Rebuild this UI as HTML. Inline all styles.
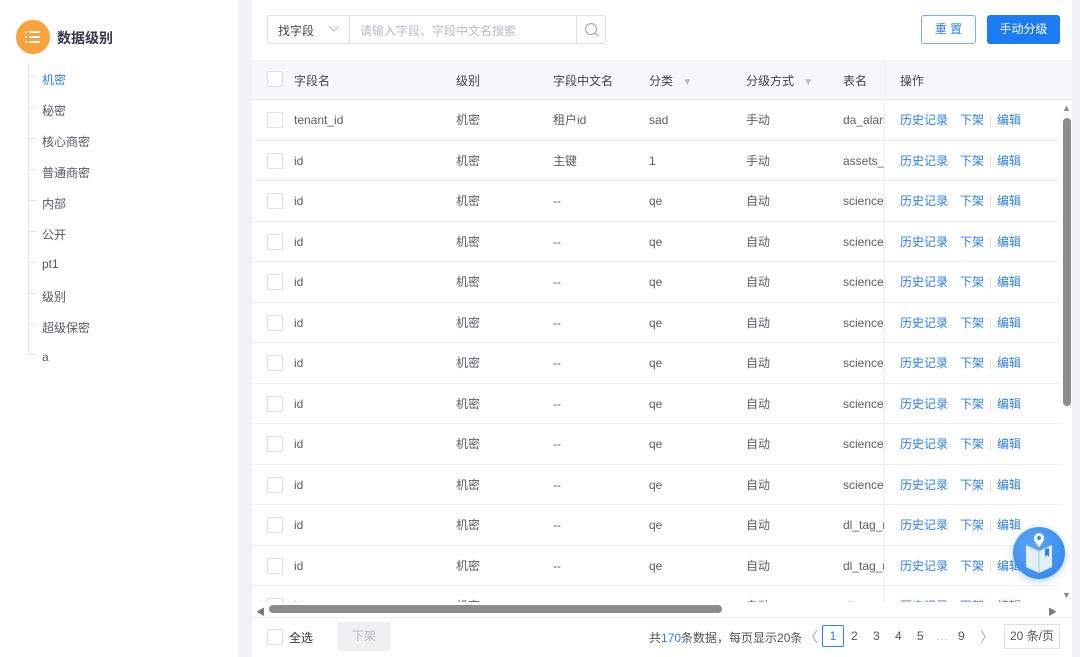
<!DOCTYPE html>
<html><head><meta charset="utf-8"><style>
*{margin:0;padding:0;box-sizing:border-box}
body{width:1080px;height:657px;overflow:hidden;background:#f0f3f6;font-family:"Liberation Sans","Noto Sans CJK SC",sans-serif;font-size:12px;color:#5a5e66;position:relative}
.a{position:absolute}
.left{left:0;top:0;width:238px;height:657px;background:#fff}
.main{left:252px;top:0;width:820px;height:657px;background:#fff}
.ti{position:absolute;left:42px;font-size:12px;color:#555a66}
.tick{position:absolute;left:28px;width:8px;height:1px;background:#e0e3e8}
.cb{position:absolute;width:16px;height:16px;border:1px solid #dcdfe6;border-radius:2px;background:#fff}
.row{position:absolute;left:252px;width:808px;height:40.5px;border-bottom:1px solid #ebeef5}
.c{position:absolute;top:0;line-height:41px;white-space:nowrap;overflow:hidden}
.bl{color:#2f7fe8}
.pg{position:absolute;top:629px;color:#555}
</style></head><body>
<div class="a left">
 <div class="a" style="left:16px;top:20px;width:34px;height:34px;border-radius:50%;background:#fba23a"></div>
 <svg class="a" style="left:25px;top:30px" width="16" height="14"><g fill="#fff"><rect x="0" y="1" width="2" height="2"/><rect x="4" y="1" width="11" height="2"/><rect x="0" y="6" width="2" height="2"/><rect x="4" y="6" width="11" height="2"/><rect x="0" y="11" width="2" height="2"/><rect x="4" y="11" width="11" height="2"/></g></svg>
 <div class="a" style="left:57px;top:28px;font-size:14px;font-weight:bold;color:#33384a">数据级别</div>
 <div class="a" style="left:28px;top:62px;width:1px;height:292px;background:#e0e3e8"></div>
 <div class="tick" style="top:76px"></div><div class="ti" style="top:71px;color:#2f7fe8">机密</div>
 <div class="tick" style="top:107px"></div><div class="ti" style="top:102px">秘密</div>
 <div class="tick" style="top:138px"></div><div class="ti" style="top:133px">核心商密</div>
 <div class="tick" style="top:169px"></div><div class="ti" style="top:164px">普通商密</div>
 <div class="tick" style="top:200px"></div><div class="ti" style="top:195px">内部</div>
 <div class="tick" style="top:231px"></div><div class="ti" style="top:226px">公开</div>
 <div class="tick" style="top:262px"></div><div class="ti" style="top:257px">pt1</div>
 <div class="tick" style="top:293px"></div><div class="ti" style="top:288px">级别</div>
 <div class="tick" style="top:324px"></div><div class="ti" style="top:319px">超级保密</div>
 <div class="tick" style="top:354px"></div><div class="ti" style="top:350px">a</div>
</div>
<div class="a main"></div>
<div class="a" style="left:267px;top:15px;width:339px;height:29px;border:1px solid #dcdfe6;border-radius:3px;background:#fff"></div>
<div class="a" style="left:349px;top:15px;width:1px;height:29px;background:#dcdfe6"></div>
<div class="a" style="left:576px;top:15px;width:1px;height:29px;background:#dcdfe6"></div>
<div class="a" style="left:278px;top:22px;color:#444">找字段</div>
<svg class="a" style="left:328px;top:25px" width="12" height="8"><path d="M1 1l5 5 5-5" stroke="#b8bcc4" fill="none"/></svg>
<div class="a" style="left:360px;top:22px;color:#b8bcc4">请输入字段、字段中文名搜索</div>
<svg class="a" style="left:584px;top:22px" width="16" height="16"><circle cx="7" cy="7" r="5.5" stroke="#aaa" fill="none" stroke-width="1.2"/><path d="M11 11l3.5 3.5" stroke="#aaa" stroke-width="1.2"/></svg>
<div class="a" style="left:921px;top:15px;width:55px;height:29px;border:1px solid #7aaef0;border-radius:3px;color:#2f7fe8;text-align:center;line-height:27px">重 置</div>
<div class="a" style="left:987px;top:15px;width:73px;height:29px;background:#1b7cf5;border-radius:3px;color:#fff;text-align:center;line-height:29px">手动分级</div>
<div class="a" style="left:252px;top:60px;width:820px;height:40px;background:#f6f7f9;border-bottom:1px solid #ebeef5"></div>
<div class="cb" style="left:267px;top:71px"></div>
<div class="a" style="top:72px;left:294px;color:#444">字段名</div>
<div class="a" style="top:72px;left:456px;color:#444">级别</div>
<div class="a" style="top:72px;left:553px;color:#444">字段中文名</div>
<div class="a" style="top:72px;left:649px;color:#444">分类 <span style="color:#bbb;font-size:10px;margin-left:6px">▼</span></div>
<div class="a" style="top:72px;left:746px;color:#444">分级方式 <span style="color:#bbb;font-size:10px;margin-left:6px">▼</span></div>
<div class="a" style="top:72px;left:843px;color:#444">表名</div>
<div class="a" style="top:72px;left:900px;color:#444">操作</div>
<div id="rows"></div>
<script>
var d=[["tenant_id","租户id","sad","手动","da_alarm"],["id","主键","1","手动","assets_al"],["id","--","qe","自动","science_p"],["id","--","qe","自动","science_p"],["id","--","qe","自动","science_p"],["id","--","qe","自动","science_p"],["id","--","qe","自动","science_p"],["id","--","qe","自动","science_n"],["id","--","qe","自动","science_n"],["id","--","qe","自动","science_n"],["id","--","qe","自动","dl_tag_rc"],["id","--","qe","自动","dl_tag_rc"],["id","--","qe","自动","dl_tag_rc"]];
var h="";
for(var i=0;i<d.length;i++){var t=100+i*40.5;var r=d[i];
h+='<div class="row" style="top:'+t+'px"><div class="cb" style="left:15px;top:12px"></div><div class="c" style="left:42px">'+r[0]+'</div><div class="c" style="left:204px">机密</div><div class="c" style="left:301px">'+r[1]+'</div><div class="c" style="left:397px">'+r[2]+'</div><div class="c" style="left:494px">'+r[3]+'</div><div class="c" style="left:591px;width:41px">'+r[4]+'</div><div class="c bl" style="left:648px">历史记录</div><div class="c bl" style="left:708px">下架</div><div class="c" style="left:737px;color:#ddd">|</div><div class="c bl" style="left:745px">编辑</div></div>';}
document.getElementById("rows").innerHTML=h;
</script>
<div class="a" style="left:884px;top:60px;width:1px;height:543px;background:#eef0f3;box-shadow:-2px 0 4px rgba(0,0,0,.04)"></div>
<div class="a" style="left:252px;top:602px;width:820px;height:55px;background:#fff"></div>
<div class="a" style="left:256px;top:605px;color:#777;font-size:9px">◀</div>
<div class="a" style="left:269px;top:605px;width:453px;height:8px;border-radius:4px;background:#8c8c8c"></div>
<div class="a" style="left:1048px;top:605px;color:#777;font-size:9px">▶</div>
<div class="a" style="left:1062px;top:103px;color:#888;font-size:9px">▲</div>
<div class="a" style="left:1063px;top:118px;width:8px;height:288px;border-radius:4px;background:#8c8c8c"></div>
<div class="a" style="left:1062px;top:590px;color:#888;font-size:9px">▼</div>
<div class="a" style="left:252px;top:617px;width:820px;height:1px;background:#ebeef5"></div>
<div class="cb" style="left:267px;top:629px"></div>
<div class="a" style="left:289px;top:629px;color:#333">全选</div>
<div class="a" style="left:337px;top:622px;width:54px;height:29px;background:#eeeff1;border-radius:3px;color:#bbb;text-align:center;line-height:29px">下架</div>
<div class="a" style="left:649px;top:629px;color:#555">共<span class="bl">170</span>条数据，每页显示20条</div>
<div class="a" style="left:804px;top:627px;color:#aaa;font-size:14px">〈</div>
<div class="a" style="left:822px;top:625px;width:22px;height:22px;border:1px solid #2f7fe8;border-radius:2px;color:#2f7fe8;text-align:center;line-height:20px">1</div>
<div class="pg" style="left:851px">2</div><div class="pg" style="left:873px">3</div><div class="pg" style="left:895px">4</div><div class="pg" style="left:917px">5</div><div class="pg" style="left:936px;color:#bbb">…</div><div class="pg" style="left:958px">9</div>
<div class="a" style="left:980px;top:627px;color:#aaa;font-size:14px">〉</div>
<div class="a" style="left:1004px;top:624px;width:56px;height:25px;border:1px solid #dcdfe6;border-radius:2px;color:#555;text-align:center;line-height:23px">20 条/页</div>
<div class="a" style="left:1013px;top:527px;width:52px;height:52px;border-radius:50%;background:radial-gradient(circle at 40% 35%,#5ba6f7,#2f82ea);box-shadow:0 2px 8px rgba(47,130,234,.35)"></div>
<svg class="a" style="left:1013px;top:527px" width="52" height="52"><path d="M13 18 L26 24 L39 18 L39 40 L26 46 L13 40Z" fill="#e3effd"/><path d="M26 24V46" stroke="#9fc6f3"/><path d="M32 22v8l2-2 2 2v-9z" fill="#2f82ea"/><path d="M26 6a5 5 0 0 1 5 5c0 4-5 9-5 9s-5-5-5-9a5 5 0 0 1 5-5z" fill="#fff"/><circle cx="26" cy="11" r="2" fill="#3a8aee"/></svg>
</body></html>
